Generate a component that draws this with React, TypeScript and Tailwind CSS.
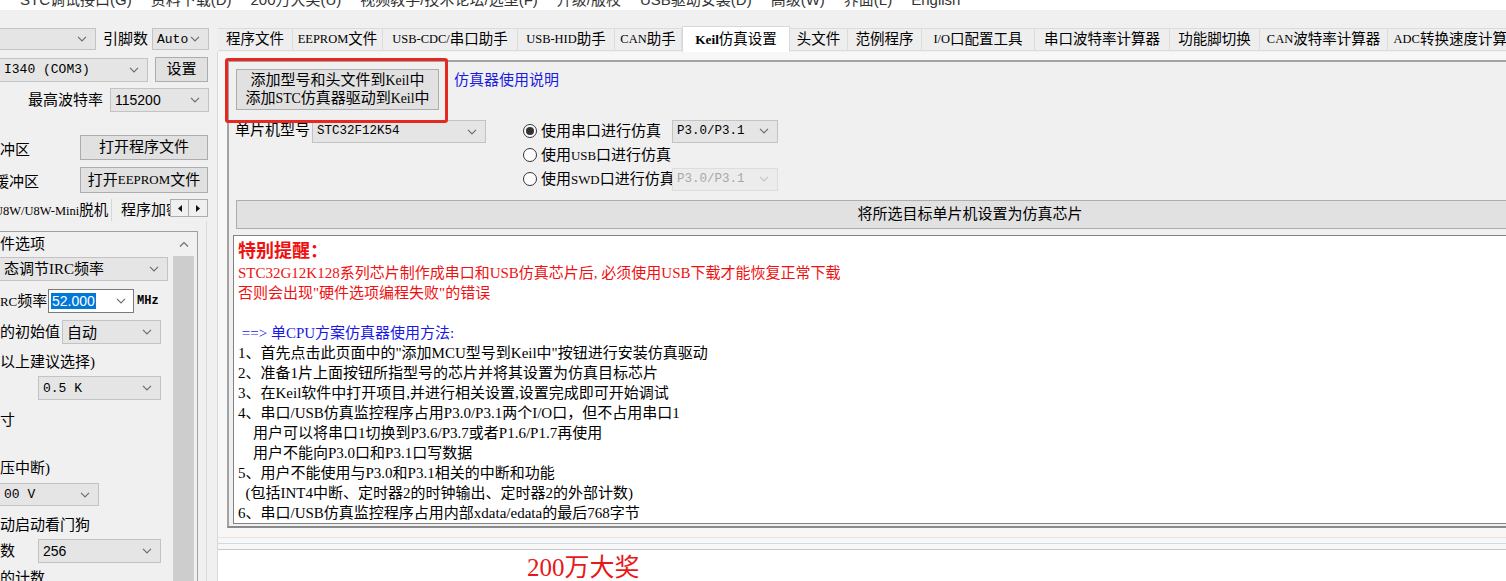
import React from "react";

const SERIF = "font-['Liberation_Serif','Noto_Sans_CJK_SC',serif]";
const MONO = "font-['Liberation_Mono','Noto_Sans_CJK_SC',monospace]";
const SANS = "font-['Liberation_Sans','Noto_Sans_CJK_SC',sans-serif]";

const MENU = [
  "STC调试接口(G)",
  "资料下载(D)",
  "200万大奖(U)",
  "视频教学/技术论坛/选型(F)",
  "升级/版校",
  "USB驱动安装(D)",
  "高级(W)",
  "界面(L)",
  "English",
];

const TABS = [
  { label: "程序文件", w: "w-[75px]" },
  { label: "EEPROM文件", w: "w-[90px]" },
  { label: "USB-CDC/串口助手", w: "w-[135px]" },
  { label: "USB-HID助手", w: "w-[97px]" },
  { label: "CAN助手", w: "w-[67px]" },
  { label: "Keil仿真设置", w: "w-[108px]", active: true },
  { label: "头文件", w: "w-[58px]" },
  { label: "范例程序", w: "w-[74px]" },
  { label: "I/O口配置工具", w: "w-[113px]" },
  { label: "串口波特率计算器", w: "w-[135px]" },
  { label: "功能脚切换", w: "w-[90px]" },
  { label: "CAN波特率计算器", w: "w-[128px]" },
  { label: "ADC转换速度计算器", w: "w-[140px]" },
];

type Line = { text: string; color?: string };

const NOTES: Line[] = [
  { text: "STC32G12K128系列芯片制作成串口和USB仿真芯片后, 必须使用USB下载才能恢复正常下载", color: "text-[#f01010]" },
  { text: "否则会出现\"硬件选项编程失败\"的错误", color: "text-[#f01010]" },
  { text: "" },
  { text: " ==> 单CPU方案仿真器使用方法:", color: "text-[#1818e6]" },
  { text: "1、首先点击此页面中的\"添加MCU型号到Keil中\"按钮进行安装仿真驱动" },
  { text: "2、准备1片上面按钮所指型号的芯片并将其设置为仿真目标芯片" },
  { text: "3、在Keil软件中打开项目,并进行相关设置,设置完成即可开始调试" },
  { text: "4、串口/USB仿真监控程序占用P3.0/P3.1两个I/O口，但不占用串口1" },
  { text: "    用户可以将串口1切换到P3.6/P3.7或者P1.6/P1.7再使用" },
  { text: "    用户不能向P3.0口和P3.1口写数据" },
  { text: "5、用户不能使用与P3.0和P3.1相关的中断和功能" },
  { text: "  (包括INT4中断、定时器2的时钟输出、定时器2的外部计数)" },
  { text: "6、串口/USB仿真监控程序占用内部xdata/edata的最后768字节" },
];

// ASCII runs drawn a little narrower, like the half-width letters of the original font
function Mix({ s, bold, tight }: { s: string; bold?: boolean; tight?: boolean }) {
  const parts = s.split(/([\x20-\x7e]+)/).filter(Boolean);
  return (
    <>
      {parts.map((p, i) =>
        /^[\x20-\x7e]+$/.test(p) ? (
          <span key={i} className={`${tight ? "text-[0.86em]" : "text-[0.92em]"} ${bold ? "font-bold" : ""}`}>
            {p}
          </span>
        ) : (
          <span key={i}>{p}</span>
        )
      )}
    </>
  );
}

function Chevron({ up, muted }: { up?: boolean; muted?: boolean }) {
  return (
    <svg width="10" height="6" viewBox="0 0 10 6" className="shrink-0">
      <path
        d={up ? "M1 5.5L5 1.5l4 4" : "M1 0.8l4 4 4-4"}
        fill="none"
        stroke={muted ? "#c4c4c4" : "#6e6e6e"}
        strokeWidth="1.2"
      />
    </svg>
  );
}

function Combo({
  text,
  className = "",
  font = MONO,
  size = "text-[13px]",
  kind = "list",
}: {
  text: string;
  className?: string;
  font?: string;
  size?: string;
  kind?: "list" | "off";
}) {
  const skin =
    kind === "off"
      ? "bg-[#ececec] border-[#dcdcdc] text-[#a8a8a8]"
      : "bg-[#e5e5e5] border-[#c3c3c3]";
  return (
    <div className={`flex items-center justify-between border pl-[4px] pr-[8px] shrink-0 ${skin} ${className}`}>
      <span className={`${font} ${size} leading-none whitespace-nowrap`}>{text}</span>
      <Chevron muted={kind === "off"} />
    </div>
  );
}

function Btn({ children, className = "" }: { children: React.ReactNode; className?: string }) {
  return (
    <button
      type="button"
      className={`flex items-center justify-center shrink-0 border border-[#adadad] bg-[#e1e1e1] ${SERIF} text-[15px] leading-none whitespace-nowrap ${className}`}
    >
      {children}
    </button>
  );
}

function Radio({ on }: { on?: boolean }) {
  return (
    <span className="w-[14px] h-[14px] rounded-full border border-[#333] bg-white flex items-center justify-center shrink-0">
      {on && <span className="w-[8px] h-[8px] rounded-full bg-[#333]" />}
    </span>
  );
}

function MenuBar() {
  return (
    <div className="h-[10px] bg-white overflow-hidden">
      <div className={`flex gap-[19px] pl-[20px] -mt-[9px] ${SANS} text-[15px] leading-[18px] text-[#333] whitespace-nowrap`}>
        {MENU.map((m) => (
          <span key={m}>{m}</span>
        ))}
      </div>
    </div>
  );
}

function LeftPanel() {
  return (
    <div className={`w-[212px] shrink-0 flex flex-col ${SERIF} text-[15px] leading-none whitespace-nowrap`}>
      <div className="h-[18px] shrink-0" />
      <div className="flex items-center h-[22px] shrink-0">
        <Combo text="" className="w-[96px] h-[22px] border-l-0" />
        <span className="ml-[7px] w-[45px]">引脚数</span>
        <Combo text="Auto" className="ml-[4px] w-[57px] h-[22px]" />
      </div>
      <div className="flex items-center h-[25px] mt-[7px] shrink-0">
        <Combo text="I340 (COM3)" className="w-[148px] h-[24px] border-l-0 pl-0" />
        <Btn className="ml-[7px] w-[53px] h-[25px]">设置</Btn>
      </div>
      <div className="flex items-center h-[24px] mt-[6px] shrink-0">
        <span className="pl-[28px] w-[110px]">最高波特率</span>
        <Combo text="115200" font={SANS} size="text-[14px]" className="w-[99px] h-[24px]" />
      </div>
      <div className="flex items-center h-[25px] mt-[23px] shrink-0">
        <span className="w-[80px] pt-[6px]">冲区</span>
        <Btn className="w-[128px] h-[25px]">打开程序文件</Btn>
      </div>
      <div className="flex items-center h-[26px] mt-[7px] shrink-0">
        <span className="w-[80px] pt-[4px] overflow-hidden">
          <span className="-ml-[6px] inline-block">缓冲区</span>
        </span>
        <Btn className="w-[128px] h-[26px]">
          <Mix s="打开EEPROM文件" tight />
        </Btn>
      </div>
      <div className="flex items-end h-[23px] mt-[5px] shrink-0">
        <div className="w-[112px] h-[22px] flex items-center overflow-hidden border-r border-[#d6d6d6] bg-[#f0f0f0]">
          <span className="-ml-[6px] text-[14.5px]">
            <Mix s="U8W/U8W-Mini脱机" tight />
          </span>
        </div>
        <div className="w-[58px] h-[22px] flex items-center overflow-hidden pl-[9px]">
          <span>程序加密</span>
        </div>
        <div className="flex mb-[4px]">
          <span className="w-[19px] h-[18px] border border-[#adadad] bg-[#f0f0f0] flex items-center justify-center">
            <svg width="4" height="7" viewBox="0 0 4 7">
              <path d="M4 0v7L0 3.5z" fill="#111" />
            </svg>
          </span>
          <span className="w-[19px] h-[18px] border border-l-0 border-[#adadad] bg-[#f0f0f0] flex items-center justify-center">
            <svg width="4" height="7" viewBox="0 0 4 7">
              <path d="M0 0v7l4-3.5z" fill="#111" />
            </svg>
          </span>
        </div>
      </div>
      <div className="flex-1 w-[207px] pt-[10px] border-r border-[#dcdcdc] min-h-0">
        <div className="w-[198px] h-full border-t border-r border-[#a0a0a0] flex overflow-hidden">
          <div className="w-[173px] flex flex-col">
            <div className="mt-[2px] h-[20px] flex items-center">件选项</div>
            <Combo text="态调节IRC频率" font={SERIF} size="text-[15px]" className="mt-[3px] w-[168px] h-[24px] border-l-0 pl-0" />
            <div className="mt-[8px] h-[24px] flex items-center">
              <span className="w-[48px]">
                <Mix s="RC频率" tight />
              </span>
              <div className="w-[86px] h-[24px] bg-white border border-[#7a7a7a] flex items-center justify-between pl-[2px] pr-[7px]">
                <span className={`${SANS} text-[14px] leading-[16px] bg-[#0078d7] text-white px-[1px]`}>52.000</span>
                <Chevron />
              </div>
              <span className={`${MONO} text-[12px] ml-[3px] font-bold`}>MHz</span>
            </div>
            <div className="mt-[7px] h-[24px] flex items-center">
              <span className="w-[62px]">的初始值</span>
              <Combo text="自动" font={SANS} size="text-[15px]" className="w-[99px] h-[24px]" />
            </div>
            <div className="mt-[8px] h-[20px] flex items-center">以上建议选择)</div>
            <Combo text="0.5 K" className="mt-[4px] ml-[38px] w-[123px] h-[24px]" />
            <div className="mt-[10px] h-[20px] flex items-center">寸</div>
            <div className="mt-[28px] h-[20px] flex items-center">压中断)</div>
            <Combo text="00 V" className="mt-[5px] w-[99px] h-[23px] border-l-0 pl-0" />
            <div className="mt-[9px] h-[20px] flex items-center">动启动看门狗</div>
            <div className="mt-[4px] h-[24px] flex items-center">
              <span className="w-[38px]">数</span>
              <Combo text="256" font={SANS} size="text-[14px]" className="w-[123px] h-[24px]" />
            </div>
            <div className="mt-[5px] h-[20px] flex items-center">的计数</div>
          </div>
          <div className="w-[21px] flex flex-col">
            <div className="h-[24px] flex items-center justify-center">
              <Chevron up />
            </div>
            <div className="flex-1 bg-[#cdcdcd]" />
          </div>
        </div>
      </div>
    </div>
  );
}

function TabStrip() {
  return (
    <div className={`flex items-end h-[26px] mt-[16px] pl-[6px] ${SERIF} text-[14.5px] leading-none whitespace-nowrap`}>
      {TABS.map((t) =>
        t.active ? (
          <div
            key={t.label}
            className={`${t.w} h-[26px] shrink-0 bg-white border border-b-0 border-[#d9d9d9] flex items-center justify-center`}
          >
            <Mix s={t.label} bold />
          </div>
        ) : (
          <div
            key={t.label}
            className={`${t.w} h-[23px] mb-[1px] shrink-0 bg-[#eeeeee] border border-l-0 border-[#dcdcdc] flex items-center justify-center`}
          >
            <Mix s={t.label} tight />
          </div>
        )
      )}
    </div>
  );
}

function KeilPage() {
  return (
    <div className="ml-[5px] border-l border-[#d9d9d9] bg-[#f7f7f7] pt-[8px]">
      <div className="relative ml-[9px] w-[1480px] h-[468px] border-t-2 border-l-2 border-b-2 border-t-[#a3a3a3] border-l-[#a3a3a3] border-b-[#8a8a8a] bg-[#f0f0f0]">
        <div className={`flex mt-[7px] ml-[7px] ${SERIF} text-[15px] leading-none`}>
          <Btn className="w-[203px] h-[41px] flex-col gap-[3px]">
            <span>
              <Mix s="添加型号和头文件到Keil中" />
            </span>
            <span>
              <Mix s="添加STC仿真器驱动到Keil中" />
            </span>
          </Btn>
          <span className="ml-[15px] mt-[4px] leading-[15px] text-[#1c1ce0]">仿真器使用说明</span>
        </div>

        <div className={`flex mt-[9px] ml-[6px] ${SERIF} text-[15px] leading-none whitespace-nowrap`}>
          <span className="w-[77px] h-[23px] flex items-center">单片机型号</span>
          <Combo text="STC32F12K54" size="text-[12.5px]" className="mt-[1px] w-[174px] h-[23px]" />
          <div className="ml-[37px] flex flex-col">
            <div className="h-[24px] flex items-center">
              <Radio on />
              <span className="ml-[4px] w-[131px]">使用串口进行仿真</span>
              <Combo text="P3.0/P3.1" size="text-[12.5px]" className="w-[106px] h-[23px]" />
            </div>
            <div className="h-[24px] flex items-center">
              <Radio />
              <span className="ml-[4px]">
                <Mix s="使用USB口进行仿真" tight />
              </span>
            </div>
            <div className="h-[24px] flex items-center">
              <Radio />
              <span className="ml-[4px] w-[131px]">
                <Mix s="使用SWD口进行仿真" tight />
              </span>
              <Combo text="P3.0/P3.1" kind="off" size="text-[12.5px]" className="w-[106px] h-[23px]" />
            </div>
          </div>
        </div>

        <Btn className="mt-[9px] ml-[7px] w-[1468px] h-[29px]">将所选目标单片机设置为仿真芯片</Btn>

        <div className={`mt-[6px] ml-[4px] w-[1480px] h-[289px] bg-white border border-[#828282] pl-[4px] pt-[4px] ${SERIF} overflow-hidden`}>
          <div className="h-[23px] text-[18px] leading-[23px] font-bold text-[#f01010]">特别提醒：</div>
          {NOTES.map((l, i) => (
            <div key={i} className={`h-[20px] text-[15px] leading-[20px] whitespace-pre ${l.color ?? "text-black"}`}>
              {l.text}
            </div>
          ))}
        </div>

        <div className="absolute -left-[4px] -top-[4px] w-[223px] h-[65px] border-[3px] border-[#e52822] rounded-[3px]" />
      </div>

      <div className="h-[21px] flex flex-col">
        <div className="h-[9px]" />
        <div className="h-px bg-[#f1dede]" />
        <div className="h-[5px]" />
        <div className="h-px bg-[#c9dcea]" />
      </div>
      <div className="h-[40px] bg-white border-t border-[#c8c8c8] pl-[309px] pt-[5px]">
        <span className={`${SERIF} text-[25px] leading-[26px] text-[#e81818]`}>200万大奖</span>
      </div>
    </div>
  );
}

export default function App() {
  return (
    <div className="w-[1506px] h-[581px] overflow-hidden bg-[#f0f0f0] text-black">
      <MenuBar />
      <div className="flex">
        <LeftPanel />
        <div className="flex-1 min-w-0 overflow-hidden flex flex-col">
          <TabStrip />
          <KeilPage />
        </div>
      </div>
    </div>
  );
}
